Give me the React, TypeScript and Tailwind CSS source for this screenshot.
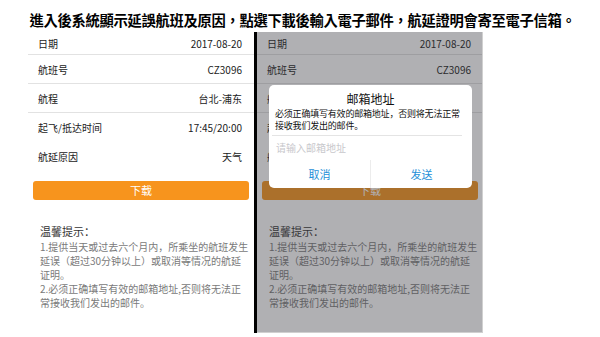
const rows = [
  { label: "日期", value: "2017-08-20", h: "h-[23px]", line: true },
  { label: "航班号", value: "CZ3096", h: "h-[29px]", line: true },
  { label: "航程", value: "台北-浦东", h: "h-[29px]", line: true },
  { label: "起飞/抵达时间", value: "17:45/20:00", h: "h-[29px]", line: false },
  { label: "航延原因", value: "天气", h: "h-[28px]", line: false },
]

const tips = [
  "1.提供当天或过去六个月内，所乘坐的航班发生",
  "延误（超过30分钟以上）或取消等情况的航延",
  "证明。",
  "2.必须正确填写有效的邮箱地址,否则将无法正",
  "常接收我们发出的邮件。",
]

function Screen({ dim }: { dim?: boolean }) {
  return (
    <div className="relative w-[226px] h-[301px] bg-white overflow-hidden">
      <div className="flex flex-col">
        {rows.map((r) => (
          <div
            key={r.label}
            className={`flex items-center justify-between pl-[10px] pr-[12px] ${r.h} ${r.line ? "border-b border-[#e2e2e2]" : ""}`}
          >
            <span className="text-[10px] text-[#222]">{r.label}</span>
            <span className="text-[10px] text-[#222]">{r.value}</span>
          </div>
        ))}
      </div>
      <div className="mt-[11px] mx-[5px] h-[19px] rounded-[3px] bg-[#f7941d] flex items-center justify-center text-[11px] text-white">
        下载
      </div>
      <div className="mt-[24px] pl-[12px]">
        <div className="text-[11px] leading-[15px] text-[#333]">温馨提示：</div>
        <div className="mt-[1px] flex flex-col">
          {tips.map((t) => (
            <span key={t} className="whitespace-nowrap text-[10px] leading-[14px] text-[#7a7a7a]">
              {t}
            </span>
          ))}
        </div>
      </div>
      {dim && (
        <>
          <div className="absolute inset-0 bg-[#3a3940]/40 border-r border-b border-[#d0d0d0]" />
          <div className="absolute left-[12px] top-[53px] w-[203px] h-[103px] rounded-[5px] bg-white flex flex-col">
            <div className="pt-[6px] text-center text-[12px] leading-[16px] text-[#111]">邮箱地址</div>
            <p className="mt-[1px] pl-[6px] pr-[4px] text-[9px] leading-[12px] tracking-[-0.2px] text-[#111]">
              必须正确填写有效的邮箱地址，否则将无法正常接收我们发出的邮件。
            </p>
            <div className="mt-[3px] ml-[3px] mr-[10px] border-t border-[#e4e4e4]" />
            <div className="pt-[5px] pl-[7px] text-[10px] leading-[14px] text-[#c8c8cc]">请输入邮箱地址</div>
            <div className="mt-auto flex h-[28px]">
              <div className="flex-1 flex items-center justify-center text-[11px] text-[#1e8fd8]">取消</div>
              <div className="w-px bg-[#ececec]" />
              <div className="flex-1 flex items-center justify-center text-[11px] text-[#1e8fd8]">发送</div>
            </div>
          </div>
        </>
      )}
    </div>
  )
}

export default function App() {
  return (
    <div
      className="w-[600px] h-[337px] bg-white"
      style={{ fontFamily: '"Noto Sans CJK SC", "Noto Sans", sans-serif' }}
    >
      <div
        className="h-[32px] pt-[8px] pl-[5px] flex items-center justify-center text-[14.3px] font-bold text-black tracking-[-0.3px]"
        style={{ fontFamily: '"Noto Sans CJK TC", "Noto Sans", sans-serif' }}
      >
        進入後系統顯示延誤航班及原因，點選下載後輸入電子郵件，航延證明會寄至電子信箱。
      </div>
      <div className="flex pl-[28px]">
        <Screen />
        <div className="w-[3px] h-[301px] bg-black" />
        <Screen dim />
      </div>
    </div>
  )
}
